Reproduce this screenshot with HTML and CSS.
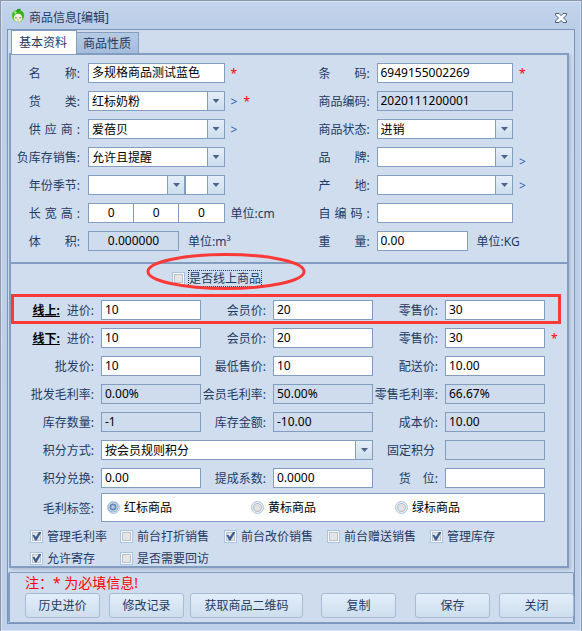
FILE: index.html
```html
<!DOCTYPE html>
<html lang="zh-CN">
<head>
<meta charset="utf-8">
<title>商品信息[编辑]</title>
<link rel="stylesheet" href="styles.css">
</head>
<body>
<main class="window">
  <header class="titlebar">
    <svg class="logo" viewBox="0 0 14 15" aria-hidden="true">
      <circle cx="7" cy="8" r="6.2" fill="#58d428"/>
      <path d="M1.5 5.5Q4 2 7 4Q10 1 12.5 5Q13.5 8 12 10L2 9Z" fill="#35b81d"/>
      <path d="M5 3Q6 0 10 1Q9 4 6 4Z" fill="#2b9c20"/>
      <path d="M3 4.5Q4 3 6 4L4 6Z" fill="#b8f58a"/>
      <circle cx="7" cy="9.7" r="4" fill="#fbeee2"/>
      <path d="M5 9v1.5M9 9v1.5" stroke="#6a4a40" stroke-width="1"/>
      <path d="M6.3 12h1.4" stroke="#d8756a" stroke-width="1"/>
    </svg>
    <h1>商品信息[编辑]</h1>
    <button class="close" type="button" aria-label="关闭窗口">
      <svg viewBox="0 0 12 10" aria-hidden="true">
        <path d="M.5.5h3.500L6 2.500 8 .5h3.500v1.500L8.500 5l3 3v1.500H8L6 7.500 4 9.500H.5V8l3-3-3-3z" fill="#fff" stroke="#4a5a78"/>
      </svg>
    </button>
  </header>

  <div class="panel">
    <nav class="tabs">
      <button class="tab active" type="button">基本资料</button>
      <button class="tab" type="button">商品性质</button>
    </nav>

    <form class="content" id="product">
      <section class="basic">
        <label for="name">名　　称:</label>
        <input id="name" value="多规格商品测试蓝色">
        <span class="extra"><i class="req">*</i></span>
        <label for="barcode">条　　码:</label>
        <input id="barcode" value="6949155002269">
        <span class="extra"><i class="req">*</i></span>

        <label for="kind">货　　类:</label>
        <span class="combo"><select id="kind"><option>红标奶粉</option></select></span>
        <span class="extra"><a href="#kind">&gt;</a><i class="req">*</i></span>
        <label for="code">商品编码:</label>
        <input id="code" value="2020111200001" readonly>
        <span></span>

        <label for="supplier">供&#8196;应&#8196;商&#8196;:</label>
        <span class="combo"><select id="supplier"><option>爱蓓贝</option></select></span>
        <span class="extra"><a href="#supplier">&gt;</a></span>
        <label for="state">商品状态:</label>
        <span class="combo"><select id="state"><option>进销</option></select></span>
        <span></span>

        <label for="negative">负库存销售:</label>
        <span class="combo"><select id="negative"><option>允许且提醒</option></select></span>
        <span></span>
        <label for="brand">品　　牌:</label>
        <span class="combo"><select id="brand"><option></option></select></span>
        <span class="extra low"><a href="#brand">&gt;</a></span>

        <label for="year">年份季节:</label>
        <span class="pair">
          <span class="combo year"><select id="year"><option></option></select></span>
          <span class="combo season"><select id="season" aria-label="季节"><option></option></select></span>
        </span>
        <span></span>
        <label for="origin">产　　地:</label>
        <span class="combo"><select id="origin"><option></option></select></span>
        <span class="extra"><a href="#origin">&gt;</a></span>

        <label for="length">长&#8196;宽&#8196;高&#8196;:</label>
        <span class="triple">
          <input id="length" value="0">
          <input aria-label="宽" value="0">
          <input aria-label="高" value="0">
        </span>
        <span class="extra">单位:cm</span>
        <label for="own">自&#8196;编&#8196;码&#8196;:</label>
        <input id="own">
        <span></span>

        <label for="volume">体　　积:</label>
        <span class="measure"><input class="center" id="volume" value="0.000000" readonly>单位:m³</span>
        <label for="weight">重　　量:</label>
        <span class="measure"><input id="weight" value="0.00">单位:KG</span>
      </section>

      <section class="prices">
        <div class="online">
          <span class="check focus"><input type="checkbox" id="isonline"><label for="isonline">是否线上商品</label>
            <svg class="ellipse" viewBox="0 0 160 37" preserveAspectRatio="none" aria-hidden="true"><ellipse cx="80" cy="18.500" rx="78" ry="17" fill="none" stroke="#fb3a38" stroke-width="3"/></svg>
          </span>
        </div>

        <div class="row boxed">
          <label for="on-in"><b>线上:</b>进价:</label><input id="on-in" value="10">
          <label for="on-vip">会员价:</label><input id="on-vip" value="20">
          <label for="on-retail">零售价:</label><input id="on-retail" value="30">
        </div>
        <div class="row">
          <label for="off-in"><b>线下:</b>进价:</label><input id="off-in" value="10">
          <label for="off-vip">会员价:</label><input id="off-vip" value="20">
          <label for="off-retail">零售价:</label><input id="off-retail" value="30">
          <span class="extra"><i class="req">*</i></span>
        </div>
        <div class="row">
          <label for="whole">批发价:</label><input id="whole" value="10">
          <label for="lowest">最低售价:</label><input id="lowest" value="10">
          <label for="ship">配送价:</label><input id="ship" value="10.00">
        </div>
        <div class="row">
          <label for="r1">批发毛利率:</label><input id="r1" value="0.00%" readonly>
          <label for="r2">会员毛利率:</label><input id="r2" value="50.00%" readonly>
          <label for="r3">零售毛利率:</label><input id="r3" value="66.67%" readonly>
        </div>
        <div class="row">
          <label for="qty">库存数量:</label><input id="qty" value="-1" readonly>
          <label for="amount">库存金额:</label><input id="amount" value="-10.00" readonly>
          <label for="cost">成本价:</label><input id="cost" value="10.00" readonly>
        </div>
        <div class="row">
          <label for="mode">积分方式:</label>
          <span class="combo wide"><select id="mode"><option>按会员规则积分</option></select></span>
          <label for="fixed">固定积分&nbsp;</label><input id="fixed" readonly>
        </div>
        <div class="row">
          <label for="swap">积分兑换:</label><input id="swap" value="0.00">
          <label for="factor">提成系数:</label><input id="factor" value="0.0000">
          <label for="place">货　位:</label><input id="place">
        </div>
        <div class="row tags">
          <span class="caption">毛利标签:</span>
          <div class="radios" role="radiogroup" aria-label="毛利标签">
            <span class="check"><input type="radio" name="tag" id="red" checked><label for="red">红标商品</label></span>
            <span class="check"><input type="radio" name="tag" id="yellow"><label for="yellow">黄标商品</label></span>
            <span class="check"><input type="radio" name="tag" id="green"><label for="green">绿标商品</label></span>
          </div>
        </div>

        <div class="options">
          <span class="check"><input type="checkbox" id="c1" checked><label for="c1">管理毛利率</label></span>
          <span class="check"><input type="checkbox" id="c2"><label for="c2">前台打折销售</label></span>
          <span class="check"><input type="checkbox" id="c3" checked><label for="c3">前台改价销售</label></span>
          <span class="check"><input type="checkbox" id="c4"><label for="c4">前台赠送销售</label></span>
          <span class="check"><input type="checkbox" id="c5" checked><label for="c5">管理库存</label></span>
          <span class="check"><input type="checkbox" id="c6" checked><label for="c6">允许寄存</label></span>
          <span class="check"><input type="checkbox" id="c7"><label for="c7">是否需要回访</label></span>
        </div>
      </section>
    </form>

    <footer class="footer">
      <p>注：* 为必填信息!</p>
      <div class="actions">
        <button type="button">历史进价</button>
        <button type="button">修改记录</button>
        <button type="button" class="qr">获取商品二维码</button>
        <button type="button" class="copy">复制</button>
        <button type="button">保存</button>
        <button type="button">关闭</button>
      </div>
    </footer>
  </div>
</main>
</body>
</html>
```
FILE: styles.css
```css
* {
  box-sizing: border-box;
}

body {
  margin: 0;
  font: 12px/20px "Noto Sans", "Noto Sans CJK SC", sans-serif;
  color: #1f3a63;
  background: #bfd0e8;
}

input,
select,
button {
  font: inherit;
  color: inherit;
  margin: 0;
}

.window {
  min-height: 100vh;
  padding: 0 6px 7px;
  border: 1px solid #8c98a8;
  border-bottom-color: #8798b0;
  background: linear-gradient(#c3d4ec, #bbcee7 28px, #bfd1ea);
  box-shadow: inset 1px 1px #d5e2f4, inset -1px -1px #d5e2f4;
}

.titlebar {
  display: flex;
  align-items: center;
  height: 28px;
  padding: 5px 8px 0 4px;
}

.logo {
  width: 14px;
  height: 15px;
  margin-top: -4px;
}

h1 {
  flex: 1;
  margin: 0 0 0 4px;
  font: inherit;
  line-height: 24px;
}

.close {
  display: flex;
  padding: 0;
  border: 0;
  background: none;
}

.close svg {
  width: 12px;
  height: 10px;
}

.panel {
  border: 1px solid #7896ba;
  background: #cfdcee;
}

.tabs {
  display: flex;
  align-items: flex-end;
  height: 23px;
  padding-left: 3px;
}

.tab {
  height: 21px;
  padding: 0 7px 0 6px;
  border: 1px solid #839dc1;
  border-left: 0;
  border-bottom: 0;
  background: linear-gradient(#b5cae4, #a5bcda);
  line-height: 22px;
}

.tab.active {
  z-index: 1;
  height: 24px;
  margin-bottom: -1px;
  padding: 0 9px 0 7px;
  border-left: 1px solid #839dc1;
  background: #fff;
}

.content {
  margin: 0 5px 4px 1px;
  border: 2px solid #839dc1;
  background: #d0ddef;
  box-shadow: 2px 2px 3px #b1bfd3;
}

.basic {
  display: grid;
  grid-template-columns: 77px 1fr 94px 58px 1fr 54px;
  row-gap: 8px;
  padding: 8px 0 11px;
  border-bottom: 2px solid #839dc1;
}

.basic > label,
.row > label,
.caption {
  padding-right: 7px;
  line-height: 22px;
  height: 20px;
  text-align: right;
  white-space: nowrap;
}

.basic > label {
  padding-right: 8px;
}

input:not([type]),
select {
  display: block;
  width: 100%;
  min-width: 0;
  height: 20px;
  padding: 0 3px;
  border: 1px solid #839dc1;
  border-radius: 0;
  background: #fff;
  color: #000;
  outline: 0;
}

input:not([type]):read-only {
  background: #cfdcee;
}

select {
  appearance: none;
}

.combo {
  position: relative;
  display: block;
}

.combo::before,
.combo::after {
  content: "";
  position: absolute;
  pointer-events: none;
}

.combo::before {
  top: 1px;
  right: 1px;
  width: 16px;
  height: 18px;
  border-left: 1px solid #839dc1;
  background: linear-gradient(#e4eef9, #cddded);
}

.combo::after {
  top: 8px;
  right: 5px;
  width: 7px;
  height: 4px;
  background: #4d6488;
  clip-path: polygon(0 0, 100% 0, 50% 100%);
}

.extra {
  display: flex;
  gap: 6px;
  padding-left: 6px;
  line-height: 22px;
  height: 20px;
}

.low {
  padding-top: 4px;
}

.extra a {
  color: #2e5db0;
  text-decoration: none;
}

.req {
  color: #f00;
  font-style: normal;
}

.pair,
.triple {
  display: flex;
}

.year {
  flex: 96;
}

.season {
  flex: 39;
}

.triple input:not([type]) {
  text-align: center;
}

.triple input + input {
  margin-left: -1px;
}

.measure {
  grid-column: span 2;
  display: flex;
  gap: 9px;
  height: 20px;
  line-height: 22px;
  white-space: nowrap;
}

.measure input:not([type]) {
  width: 91px;
}

.measure .center {
  text-align: center;
}

.prices {
  display: flex;
  flex-direction: column;
  gap: 8px;
}

.online {
  display: flex;
  height: 28px;
  padding-left: 161px;
}

.check {
  position: relative;
  display: flex;
  align-items: center;
  gap: 4px;
  white-space: nowrap;
}

.focus {
  gap: 3px;
}

.focus label {
  line-height: 17px;
  outline: 1px dotted #1f3a63;
  outline-offset: -1px;
  padding: 0 1px;
}

.ellipse {
  position: absolute;
  top: -11px;
  left: -26px;
  width: 160px;
  height: 37px;
  pointer-events: none;
}

.row {
  position: relative;
  display: grid;
  grid-template-columns: 90px 1fr 72px 1fr 72px 1fr 22px;
}

.row b {
  margin-right: 7px;
  color: #000;
  text-decoration: underline;
}

.boxed::after {
  content: "";
  position: absolute;
  inset: -6px 6px -4px 0;
  border: 3px solid #fb3a38;
  pointer-events: none;
}

.wide {
  grid-column: span 3;
}

.tags {
  margin-top: -3px;
  align-items: center;
}

.radios {
  grid-column: span 5;
  display: grid;
  grid-template-columns: repeat(3, 1fr);
  height: 29px;
  padding: 0 5px;
  border: 1px solid #839dc1;
  background: #fff;
  color: #000;
}

input[type="checkbox"],
input[type="radio"] {
  appearance: none;
  display: grid;
  place-items: center;
  flex: none;
  width: 13px;
  height: 13px;
  border: 1px solid #a9c3e4;
}

input[type="checkbox"] {
  background: #e4e5e7;
  box-shadow: inset 0 0 0 1px #f5f8fc, inset 0 0 0 2px #bdc0c5;
}

input[type="checkbox"]:checked::before {
  content: "";
  width: 9px;
  height: 9px;
  background: #385b91;
  clip-path: polygon(5% 40%, 25% 35%, 42% 60%, 82% 0, 100% 0, 100% 15%, 50% 100%, 35% 100%);
}

input[type="radio"] {
  border-radius: 50%;
  background: radial-gradient(circle, #e2e2e2 3px, #b9bdc4 4px, #edf3fa 5px);
}

input[type="radio"]:checked {
  background: radial-gradient(circle at 5px 5px, #b9cbe6 1px, #5478ac 3px, #dde7f3 4px, #8eaacd 5px, #edf3fa 6px);
}

.options {
  display: grid;
  grid-template-columns: 90px 104px 103px 103px 1fr;
  grid-template-rows: 22px 18px;
  margin-top: -4px;
  padding-left: 19px;
}

.options .check {
  height: 20px;
}

.options label {
  line-height: 18px;
  padding-top: 2px;
}

.footer {
  height: 51px;
  border: 1px solid #839dc1;
  border-left-width: 2px;
  border-radius: 2px;
  padding-left: 15px;
}

.footer p {
  margin: 0;
  color: #f00;
  font-size: 14px;
  line-height: 20px;
}

.actions {
  display: flex;
  justify-content: space-between;
  margin-right: -1px;
  white-space: nowrap;
}

.actions button {
  width: 75px;
  height: 25px;
  padding: 0;
  border: 1px solid #a8bad4;
  border-radius: 3px;
  background: linear-gradient(#e2edfa, #cedeed);
}

.actions .qr {
  width: 113px;
  margin: 0 9px 0 -3px;
}

.actions .copy {
  margin-right: 10px;
}
```
